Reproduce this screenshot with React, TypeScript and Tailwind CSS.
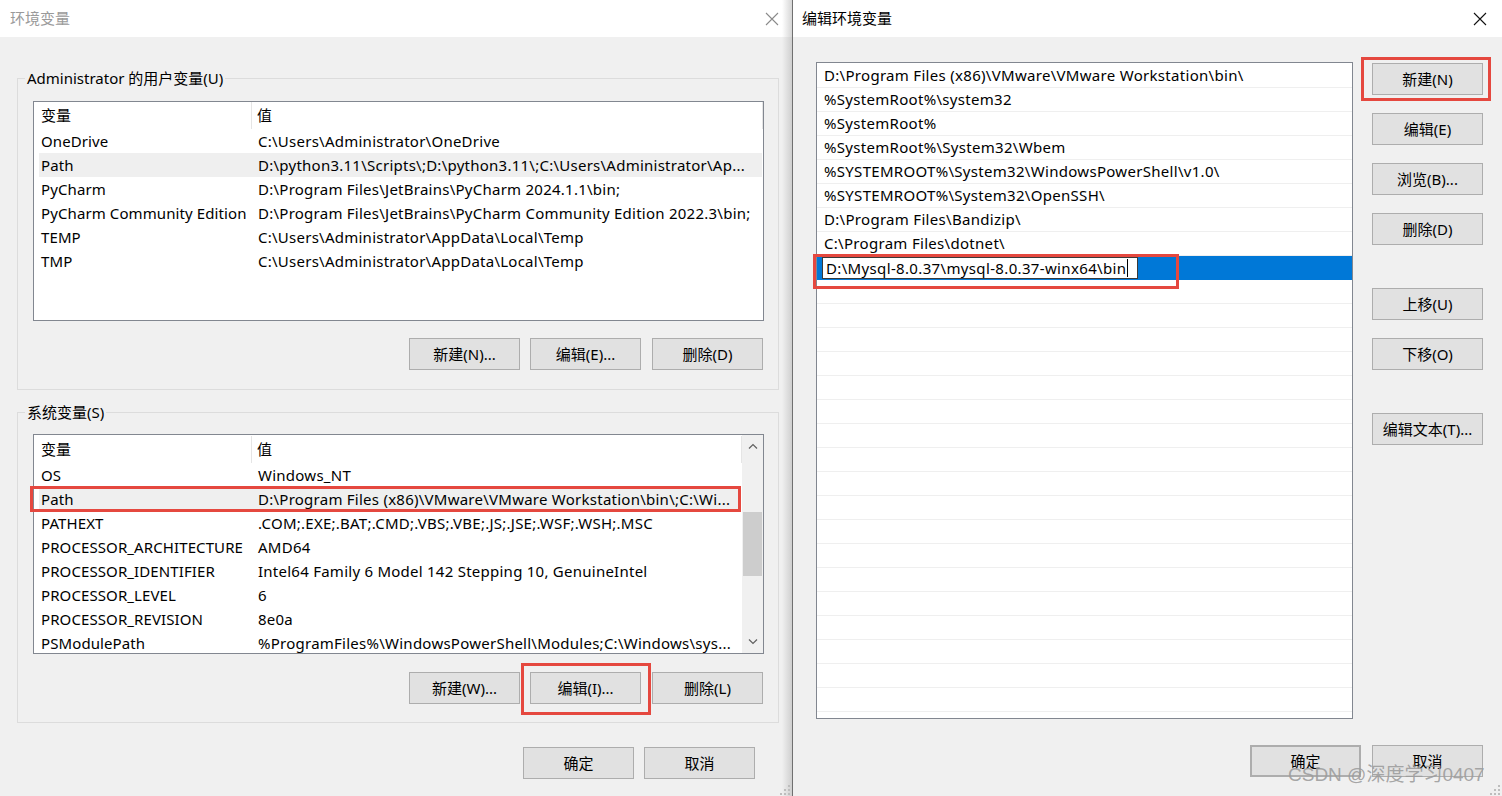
import React from "react";

const userVars: [string, string][] = [
  ["OneDrive", "C:\\Users\\Administrator\\OneDrive"],
  ["Path", "D:\\python3.11\\Scripts\\;D:\\python3.11\\;C:\\Users\\Administrator\\Ap..."],
  ["PyCharm", "D:\\Program Files\\JetBrains\\PyCharm 2024.1.1\\bin;"],
  ["PyCharm Community Edition", "D:\\Program Files\\JetBrains\\PyCharm Community Edition 2022.3\\bin;"],
  ["TEMP", "C:\\Users\\Administrator\\AppData\\Local\\Temp"],
  ["TMP", "C:\\Users\\Administrator\\AppData\\Local\\Temp"],
];

const sysVars: [string, string][] = [
  ["OS", "Windows_NT"],
  ["Path", "D:\\Program Files (x86)\\VMware\\VMware Workstation\\bin\\;C:\\Wi..."],
  ["PATHEXT", ".COM;.EXE;.BAT;.CMD;.VBS;.VBE;.JS;.JSE;.WSF;.WSH;.MSC"],
  ["PROCESSOR_ARCHITECTURE", "AMD64"],
  ["PROCESSOR_IDENTIFIER", "Intel64 Family 6 Model 142 Stepping 10, GenuineIntel"],
  ["PROCESSOR_LEVEL", "6"],
  ["PROCESSOR_REVISION", "8e0a"],
  ["PSModulePath", "%ProgramFiles%\\WindowsPowerShell\\Modules;C:\\Windows\\sys..."],
];

const pathItems: string[] = [
  "D:\\Program Files (x86)\\VMware\\VMware Workstation\\bin\\",
  "%SystemRoot%\\system32",
  "%SystemRoot%",
  "%SystemRoot%\\System32\\Wbem",
  "%SYSTEMROOT%\\System32\\WindowsPowerShell\\v1.0\\",
  "%SYSTEMROOT%\\System32\\OpenSSH\\",
  "D:\\Program Files\\Bandizip\\",
  "C:\\Program Files\\dotnet\\",
];

function Btn({ children, className = "" }: { children: React.ReactNode; className?: string }) {
  return (
    <div
      className={
        "flex items-center justify-center w-[111px] h-[32px] bg-[#e1e1e1] border border-[#adadad] text-[15px] text-black leading-none shrink-0 " +
        className
      }
    >
      {children}
    </div>
  );
}

function CloseX({ color }: { color: string }) {
  return (
    <svg width="14" height="14" viewBox="0 0 14 14">
      <path d="M1 1L13 13M13 1L1 13" stroke={color} strokeWidth="1.1" fill="none" />
    </svg>
  );
}

function Grip() {
  return (
    <svg width="10" height="10" viewBox="0 0 10 10">
      <rect x="8" y="0" width="2" height="2" fill="#bdbdbd" />
      <rect x="4" y="4" width="2" height="2" fill="#bdbdbd" />
      <rect x="8" y="4" width="2" height="2" fill="#bdbdbd" />
      <rect x="0" y="8" width="2" height="2" fill="#bdbdbd" />
      <rect x="4" y="8" width="2" height="2" fill="#bdbdbd" />
      <rect x="8" y="8" width="2" height="2" fill="#bdbdbd" />
    </svg>
  );
}

function Header() {
  return (
    <div className="flex h-[27px] items-center shrink-0">
      <div className="w-[218px] h-full flex items-center pl-[7px] border-r border-[#e5e5e5]">变量</div>
      <div className="flex-1 h-full flex items-center pl-[5px] border-r border-[#e5e5e5]">值</div>
    </div>
  );
}

function VarRow({ name, value, selected }: { name: string; value: string; selected?: boolean }) {
  return (
    <div className={"flex h-[24px] items-center ml-[5px] mr-[1px] shrink-0 " + (selected ? "bg-[#efefef]" : "")}>
      <div className="w-[213px] pl-[2px] whitespace-nowrap overflow-hidden tracking-[0.1px]">{name}</div>
      <div className="flex-1 pl-[6px] whitespace-nowrap overflow-hidden tracking-[0.25px]">{value}</div>
    </div>
  );
}

function Chevron({ up }: { up?: boolean }) {
  return (
    <svg width="10" height="6" viewBox="0 0 10 6">
      <path d={up ? "M1 5.5L5 1.5L9 5.5" : "M1 0.5L5 4.5L9 0.5"} stroke="#606060" strokeWidth="1.2" fill="none" />
    </svg>
  );
}

export default function App() {
  return (
    <div className="relative flex w-[1502px] h-[796px] overflow-hidden bg-[#f0f0f0] text-[15px] text-black font-[family-name:'Noto_Sans','Noto_Sans_CJK_SC',sans-serif]">
      {/* Left dialog */}
      <div className="relative flex flex-col w-[782px] h-full shrink-0">
        <div className="flex items-center justify-between h-[37px] bg-white pl-[10px] pr-[3px] shrink-0">
          <span className="text-[#9a9a9a]">环境变量</span>
          <CloseX color="#8a8a8a" />
        </div>
        <div className="flex flex-col flex-1 bg-[#f0f0f0] pl-[17px]">
          {/* User variables group */}
          <div className="relative mt-[41px] w-[762px] border border-[#dcdcdc] pt-[22px] pb-[19px] pl-[15px]">
            <span className="absolute -top-[11px] left-[7px] px-[2px] bg-[#f0f0f0] leading-[20px]">
              Administrator 的用户变量(U)
            </span>
            <div className="flex flex-col w-[731px] h-[220px] bg-white border border-[#828790] overflow-hidden">
              <Header />
              {userVars.map(([n, v]) => (
                <VarRow key={n} name={n} value={v} selected={n === "Path"} />
              ))}
            </div>
            <div className="flex w-[731px] justify-end gap-[10px] pr-[1px] mt-[17px]">
              <Btn>新建(N)...</Btn>
              <Btn className="mr-[1px]">编辑(E)...</Btn>
              <Btn>删除(D)</Btn>
            </div>
          </div>

          {/* System variables group */}
          <div className="relative mt-[22px] w-[762px] border border-[#dcdcdc] pt-[21px] pb-[18px] pl-[15px]">
            <span className="absolute -top-[11px] left-[7px] px-[2px] bg-[#f0f0f0] leading-[20px]">系统变量(S)</span>
            <div className="relative w-[731px] h-[220px]">
              <div className="flex w-full h-full bg-white border border-[#828790]">
                <div className="flex flex-col flex-1 overflow-hidden pt-[1px]">
                  <Header />
                  {sysVars.map(([n, v]) => (
                    <VarRow key={n} name={n} value={v} selected={n === "Path"} />
                  ))}
                </div>
                <div className="flex flex-col w-[21px] h-full bg-[#f0f0f0] shrink-0">
                  <div className="flex items-center justify-center h-[22px]">
                    <Chevron up />
                  </div>
                  <div className="h-[55px]" />
                  <div className="h-[64px] ml-[1px] mr-[1px] bg-[#cdcdcd]" />
                  <div className="flex-1" />
                  <div className="flex items-center justify-center h-[22px]">
                    <Chevron />
                  </div>
                </div>
              </div>
              <div className="absolute left-[-3px] top-[52px] w-[711px] h-[26px] border-[3px] border-[#e5483f]" />
            </div>
            <div className="flex w-[731px] justify-end gap-[10px] pr-[1px] mt-[18px]">
              <Btn>新建(W)...</Btn>
              <div className="relative mr-[1px]">
                <Btn>编辑(I)...</Btn>
                <div className="absolute -left-[9px] -top-[9px] w-[130px] h-[52px] border-[3px] border-[#e5483f]" />
              </div>
              <Btn>删除(L)</Btn>
            </div>
          </div>

          <div className="flex justify-end gap-[10px] pr-[27px] mt-[24px]">
            <Btn>确定</Btn>
            <Btn>取消</Btn>
          </div>
        </div>
        <div className="absolute right-[-8px] bottom-[1px]">
          <Grip />
        </div>
      </div>

      {/* shadow between dialogs */}
      <div className="flex flex-col w-[10px] h-full shrink-0">
        <div className="h-[37px] bg-gradient-to-r from-[#ffffff] to-[#d6d6d6]" />
        <div className="flex-1 bg-gradient-to-r from-[#f0f0f0] to-[#cfcfcf]" />
      </div>
      <div className="w-px h-full bg-[#707070] shrink-0" />

      {/* Right dialog */}
      <div className="relative flex flex-col w-[709px] h-full shrink-0">
        <div className="flex items-center justify-between h-[37px] bg-white pl-[9px] pr-[15px] shrink-0">
          <span>编辑环境变量</span>
          <CloseX color="#111111" />
        </div>
        <div className="flex flex-col flex-1 bg-[#f0f0f0]">
          <div className="flex pl-[23px] pt-[25px]">
            <div className="flex flex-col w-[537px] h-[657px] bg-white border border-[#828790] pt-[1px]">
              {pathItems.map((p) => (
                <div key={p} className="flex items-center h-[24px] pl-[7px] border-b border-[#efefef] whitespace-nowrap shrink-0 tracking-[0.3px]">
                  {p}
                </div>
              ))}
              <div className="relative flex items-center h-[24px] pl-[5px] bg-[#0078d7] shrink-0">
                <div className="flex items-center w-[316px] h-[22px] bg-white border border-[#3a3a3a] pl-[3px] whitespace-nowrap tracking-[0.35px]">
                  D:\Mysql-8.0.37\mysql-8.0.37-winx64\bin
                  <span className="inline-block w-px h-[18px] bg-black ml-[1px]" />
                </div>
                <div className="absolute -left-[4px] -top-[2px] w-[366px] h-[35px] border-[3px] border-[#e5483f]" />
              </div>
              {Array.from({ length: 18 }).map((_, i) => (
                <div key={i} className="h-[24px] border-b border-[#efefef] shrink-0" />
              ))}
            </div>
            <div className="flex flex-col ml-[19px] mt-[1px]">
              <div className="relative">
                <Btn>新建(N)</Btn>
                <div className="absolute -left-[11px] -top-[6px] w-[130px] h-[44px] border-[3px] border-[#e5483f]" />
              </div>
              <Btn className="mt-[18px]">编辑(E)</Btn>
              <Btn className="mt-[18px]">浏览(B)...</Btn>
              <Btn className="mt-[18px]">删除(D)</Btn>
              <Btn className="mt-[43px]">上移(U)</Btn>
              <Btn className="mt-[18px]">下移(O)</Btn>
              <Btn className="mt-[43px]">编辑文本(T)...</Btn>
            </div>
          </div>
          <div className="flex justify-end gap-[11px] pr-[19px] mt-[26px]">
            <Btn className="border-2 border-[#0078d7]">确定</Btn>
            <Btn>取消</Btn>
          </div>
        </div>
        <div className="absolute right-[2px] bottom-[1px]">
          <Grip />
        </div>
        <div className="absolute left-[495px] top-[762px] text-[19px] leading-[26px] text-[#9c9c9c]/90 whitespace-nowrap font-[family-name:'Liberation_Sans','Noto_Sans_CJK_SC',sans-serif]">
          CSDN @深度学习0407
        </div>
      </div>
    </div>
  );
}
